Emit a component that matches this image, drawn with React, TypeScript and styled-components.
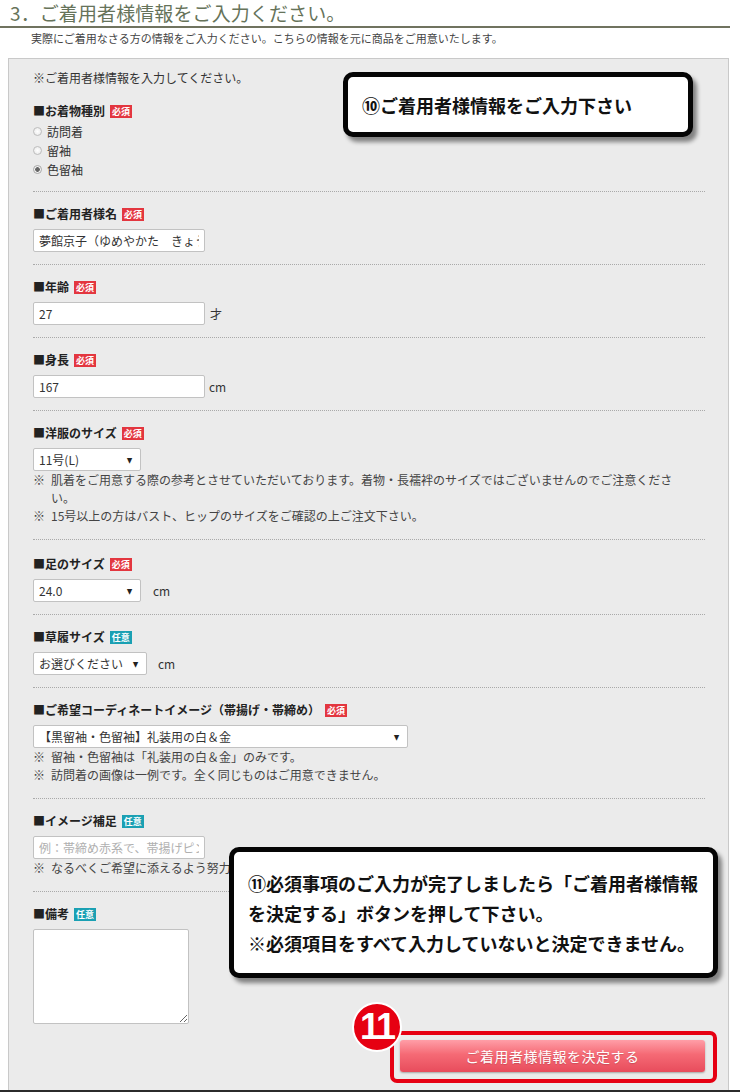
import * as React from "react";
import styled, { createGlobalStyle } from "styled-components";

const GlobalStyle = createGlobalStyle`
  html, body {
    margin: 0;
    padding: 0;
    background: #fff;
  }
  body {
    font-family: "Noto Sans CJK JP", "Noto Sans", sans-serif;
    color: #333;
  }
  * {
    box-sizing: border-box;
  }
`;

type BadgeKind = "required" | "optional";

function Badge({ kind }: { kind: BadgeKind }) {
  return <Tag $kind={kind}>{kind === "required" ? "必須" : "任意"}</Tag>;
}

function FieldLabel({ text, kind }: { text: string; kind: BadgeKind }) {
  return (
    <Label>
      <span>■{text}</span>
      <Badge kind={kind} />
    </Label>
  );
}

function Notes({ items }: { items: string[] }) {
  return (
    <NoteList>
      {items.map((t) => (
        <NoteItem key={t}>
          <NoteMark>※</NoteMark>
          <span>{t}</span>
        </NoteItem>
      ))}
    </NoteList>
  );
}

function SelectBox({ width, value, options }: { width: number; value: string; options: string[] }) {
  return (
    <SelectWrap $width={width}>
      <Select defaultValue={value}>
        {options.map((o) => (
          <option key={o}>{o}</option>
        ))}
      </Select>
    </SelectWrap>
  );
}

export default function App() {
  return (
    <Page>
      <GlobalStyle />
      <Header>
        <Title>3．ご着用者様情報をご入力ください。</Title>
        <Lead>実際にご着用なさる方の情報をご入力ください。こちらの情報を元に商品をご用意いたします。</Lead>
      </Header>

      <Panel>
        <Intro>※ご着用者様情報を入力してください。</Intro>

        <Section $first>
          <FieldLabel text="お着物種別" kind="required" />
          <RadioList>
            {["訪問着", "留袖", "色留袖"].map((k) => (
              <RadioRow key={k}>
                <Radio type="radio" name="kimono" defaultChecked={k === "色留袖"} />
                {k}
              </RadioRow>
            ))}
          </RadioList>
        </Section>

        <Section>
          <FieldLabel text="ご着用者様名" kind="required" />
          <TextInput type="text" defaultValue="夢館京子（ゆめやかた　きょうこ）" />
        </Section>

        <Section>
          <FieldLabel text="年齢" kind="required" />
          <FieldRow $gap={5}>
            <TextInput type="text" defaultValue="27" />
            <Unit>才</Unit>
          </FieldRow>
        </Section>

        <Section>
          <FieldLabel text="身長" kind="required" />
          <FieldRow $gap={4}>
            <TextInput type="text" defaultValue="167" />
            <Unit>cm</Unit>
          </FieldRow>
        </Section>

        <Section>
          <FieldLabel text="洋服のサイズ" kind="required" />
          <SelectBox width={108} value="11号(L)" options={["7号(S)", "9号(M)", "11号(L)", "13号(LL)"]} />
          <Notes
            items={[
              "肌着をご用意する際の参考とさせていただいております。着物・長襦袢のサイズではございませんのでご注意ください。",
              "15号以上の方はバスト、ヒップのサイズをご確認の上ご注文下さい。",
            ]}
          />
        </Section>

        <Section $top={16}>
          <FieldLabel text="足のサイズ" kind="required" />
          <FieldRow $gap={12}>
            <SelectBox width={108} value="24.0" options={["23.0", "23.5", "24.0", "24.5"]} />
            <Unit>cm</Unit>
          </FieldRow>
        </Section>

        <Section>
          <FieldLabel text="草履サイズ" kind="optional" />
          <FieldRow $gap={11}>
            <SelectBox width={114} value="お選びください" options={["お選びください", "M", "L"]} />
            <Unit>cm</Unit>
          </FieldRow>
        </Section>

        <Section>
          <FieldLabel text="ご希望コーディネートイメージ（帯揚げ・帯締め）" kind="required" />
          <SelectBox
            width={375}
            value="【黒留袖・色留袖】礼装用の白＆金"
            options={["【黒留袖・色留袖】礼装用の白＆金", "【訪問着】おまかせ"]}
          />
          <Notes
            items={[
              "留袖・色留袖は「礼装用の白＆金」のみです。",
              "訪問着の画像は一例です。全く同じものはご用意できません。",
            ]}
          />
        </Section>

        <Section>
          <FieldLabel text="イメージ補足" kind="optional" />
          <TextInput type="text" placeholder="例：帯締め赤系で、帯揚げピンク系" />
          <Notes items={["なるべくご希望に添えるよう努力いたします。"]} />
        </Section>

        <Section $last>
          <FieldLabel text="備考" kind="optional" />
          <TextArea />
          <ButtonRow>
            <SubmitButton type="button">ご着用者様情報を決定する</SubmitButton>
          </ButtonRow>
        </Section>
      </Panel>

      <Callout $x={343} $y={72} $w={350} $h={65}>
        <CalloutText>⑩ご着用者様情報をご入力下さい</CalloutText>
      </Callout>

      <Callout $x={229} $y={847} $w={489} $h={131}>
        <CalloutText>
          ⑪必須事項のご入力が完了しましたら「ご着用者様情報
          <br />
          を決定する」ボタンを押して下さい。
          <br />
          ※必須項目をすべて入力していないと決定できません。
        </CalloutText>
      </Callout>

      <Highlight />
      <StepBadge>11</StepBadge>
    </Page>
  );
}

const Page = styled.div`
  position: relative;
  width: 740px;
  height: 1092px;
  overflow: hidden;
  border-bottom: 2px solid #2b2b2b;
`;

const Header = styled.div`
  width: 730px;
`;

const Title = styled.h2`
  margin: 0;
  padding: 0 0 0 10px;
  font-size: 19px;
  line-height: 26px;
  font-weight: 400;
  color: #66735a;
  letter-spacing: 0.1px;
  border-bottom: 2px solid #70735f;
`;

const Lead = styled.p`
  margin: 2px 0 0 31px;
  font-size: 11px;
  line-height: 16px;
  color: #444;
`;

const Panel = styled.div`
  margin: 12px 0 0 8px;
  width: 721px;
  min-height: 1100px;
  background: #ebebeb;
  border: 1px solid #c9c9c9;
  padding: 10px 23px 0 24px;
`;

const Intro = styled.p`
  margin: 0;
  font-size: 12px;
  line-height: 18px;
  color: #333;
`;

const Section = styled.div<{ $first?: boolean; $last?: boolean; $top?: number }>`
  padding: ${(p) => (p.$first ? 16 : p.$top ?? 14)}px 0 ${(p) => (p.$last ? "0" : "12px")};
  border-bottom: ${(p) => (p.$last ? "none" : "1px dotted #a9a9a9")};
`;

const Label = styled.div`
  display: flex;
  align-items: center;
  gap: 5px;
  font-size: 12px;
  font-weight: 700;
  line-height: 16px;
  color: #222;
  margin-bottom: 7px;
`;

const Tag = styled.span<{ $kind: BadgeKind }>`
  display: inline-block;
  padding: 0 2px;
  font-size: 9px;
  font-weight: 700;
  line-height: 13px;
  color: #fff;
  background: ${(p) => (p.$kind === "required" ? "#e3363f" : "#1aa0b3")};
`;

const RadioList = styled.div`
  display: flex;
  flex-direction: column;
  margin-top: -4px;
`;

const RadioRow = styled.label`
  display: flex;
  align-items: center;
  gap: 5px;
  height: 19px;
  font-size: 12px;
  color: #333;
`;

const Radio = styled.input`
  appearance: none;
  width: 9px;
  height: 9px;
  margin: 0;
  border: 1px solid #bdbdbd;
  border-radius: 50%;
  background: radial-gradient(circle, #fff 0, #e6e6e6 100%);

  &:checked {
    background: radial-gradient(circle, #666 0 2px, #f2f2f2 2.6px);
    border-color: #a8a8a8;
  }
`;

const FieldRow = styled.div<{ $gap: number }>`
  display: flex;
  align-items: center;
  gap: ${(p) => p.$gap}px;
`;

const TextInput = styled.input`
  display: block;
  width: 172px;
  height: 23px;
  margin: 0;
  padding: 0 5px;
  border: 1px solid #c2c2c2;
  border-radius: 2px;
  background: #fff;
  font-family: inherit;
  font-size: 12px;
  color: #333;
  outline: none;

  &::placeholder {
    color: #b0b0b0;
  }
`;

const Unit = styled.span`
  font-size: 12px;
  color: #333;
`;

const SelectWrap = styled.div<{ $width: number }>`
  position: relative;
  width: ${(p) => p.$width}px;

  &::after {
    content: "▼";
    position: absolute;
    right: 8px;
    top: 50%;
    transform: translateY(-50%) scaleX(0.8);
    font-size: 7px;
    color: #222;
    pointer-events: none;
  }
`;

const Select = styled.select`
  appearance: none;
  display: block;
  width: 100%;
  height: 23px;
  margin: 0;
  padding: 0 18px 0 5px;
  border: 1px solid #c2c2c2;
  border-radius: 2px;
  background: #fff;
  font-family: inherit;
  font-size: 12px;
  color: #333;
  outline: none;
`;

const NoteList = styled.ul`
  margin: 0 0 2px;
  padding: 0;
  list-style: none;
  max-width: 660px;
`;

const NoteItem = styled.li`
  display: flex;
  font-size: 12px;
  line-height: 18px;
  color: #444;
`;

const NoteMark = styled.span`
  flex: none;
  width: 18px;
`;

const TextArea = styled.textarea`
  display: block;
  width: 156px;
  height: 95px;
  margin: 0;
  border: 1px solid #c2c2c2;
  border-radius: 2px;
  background: #fff;
  resize: both;
`;

const ButtonRow = styled.div`
  display: flex;
  justify-content: flex-end;
  margin-top: 16px;
`;

const SubmitButton = styled.button`
  width: 305px;
  height: 32px;
  border: none;
  border-radius: 3px;
  background: linear-gradient(#ff9ea7 0%, #f56a75 45%, #e84c5c 100%);
  box-shadow: 0 1px 2px rgba(0, 0, 0, 0.3);
  font-family: inherit;
  font-size: 14px;
  letter-spacing: 0.5px;
  color: #fff;
  text-shadow: 0 1px 1px rgba(0, 0, 0, 0.15);
`;

const Callout = styled.div<{ $x: number; $y: number; $w: number; $h: number }>`
  position: absolute;
  left: ${(p) => p.$x}px;
  top: ${(p) => p.$y}px;
  width: ${(p) => p.$w}px;
  height: ${(p) => p.$h}px;
  display: flex;
  align-items: center;
  padding: 0 14px;
  background: #fff;
  border: 5px solid #050505;
  border-radius: 10px;
  box-shadow: 4px 5px 4px rgba(0, 0, 0, 0.45);
`;

const CalloutText = styled.p`
  margin: 0;
  font-size: 18px;
  line-height: 30px;
  font-weight: 700;
  color: #111;
  white-space: nowrap;
`;

const Highlight = styled.div`
  position: absolute;
  left: 390px;
  top: 1031px;
  width: 327px;
  height: 52px;
  border: 4px solid #e60012;
  border-radius: 7px;
`;

const StepBadge = styled.div`
  position: absolute;
  left: 352px;
  top: 1002px;
  width: 50px;
  height: 50px;
  display: flex;
  align-items: center;
  justify-content: center;
  border-radius: 50%;
  border: 2px solid #fff;
  background: #e60012;
  font-family: "Liberation Sans", Arial, sans-serif;
  font-size: 36px;
  font-weight: 700;
  letter-spacing: -2px;
  color: #fff;
`;
